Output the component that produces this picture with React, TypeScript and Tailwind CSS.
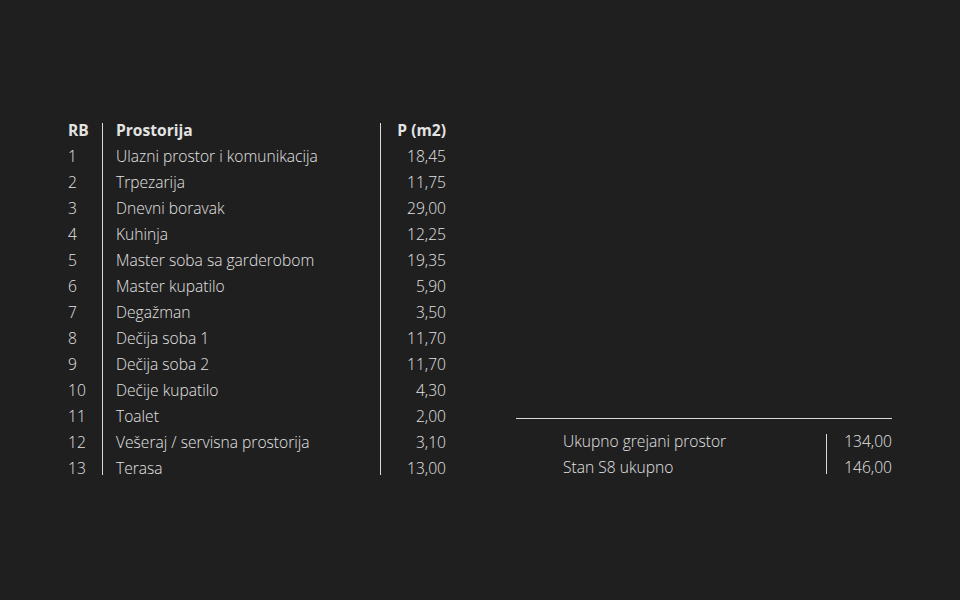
import React from 'react';

const rooms: [string, string, string][] = [
  ['1', 'Ulazni prostor i komunikacija', '18,45'],
  ['2', 'Trpezarija', '11,75'],
  ['3', 'Dnevni boravak', '29,00'],
  ['4', 'Kuhinja', '12,25'],
  ['5', 'Master soba sa garderobom', '19,35'],
  ['6', 'Master kupatilo', '5,90'],
  ['7', 'Degažman', '3,50'],
  ['8', 'Dečija soba 1', '11,70'],
  ['9', 'Dečija soba 2', '11,70'],
  ['10', 'Dečije kupatilo', '4,30'],
  ['11', 'Toalet', '2,00'],
  ['12', 'Vešeraj / servisna prostorija', '3,10'],
  ['13', 'Terasa', '13,00'],
];

const totals: [string, string][] = [
  ['Ukupno grejani prostor', '134,00'],
  ['Stan S8 ukupno', '146,00'],
];

const Line = () => <div className="w-px self-stretch my-[6px] bg-[#d9d9d9]" />;

const App: React.FC = () => {
  return (
    <div
      className="w-[960px] h-[600px] bg-[#1f1f1f] text-[#e3e3e3] text-[15.6px] font-light leading-[26px]"
      style={{ fontFamily: '"Open Sans", sans-serif' }}
    >
      <div className="flex items-end pt-[117px] pl-[68px]">
        {/* Room table */}
        <div className="flex">
          <div className="flex flex-col w-[34px]">
            <div className="font-bold">RB</div>
            {rooms.map(r => <div key={r[0]}>{r[0]}</div>)}
          </div>
          <Line />
          <div className="flex flex-col w-[277px] pl-[13px]">
            <div className="font-bold">Prostorija</div>
            {rooms.map(r => <div key={r[0]}>{r[1]}</div>)}
          </div>
          <Line />
          <div className="flex flex-col w-[65px] items-end">
            <div className="font-bold">P (m2)</div>
            {rooms.map(r => <div key={r[0]}>{r[2]}</div>)}
          </div>
        </div>

        {/* Totals */}
        <div className="ml-[70px] w-[376px] flex flex-col pb-px">
          <div className="h-px bg-[#d9d9d9] mb-[9px]" />
          <div className="flex">
            <div className="flex flex-col w-[310px] pl-[47px]">
              {totals.map(t => <div key={t[0]}>{t[0]}</div>)}
            </div>
            <Line />
            <div className="flex flex-col flex-1 items-end">
              {totals.map(t => <div key={t[0]}>{t[1]}</div>)}
            </div>
          </div>
        </div>
      </div>
    </div>
  );
};

export default App;
